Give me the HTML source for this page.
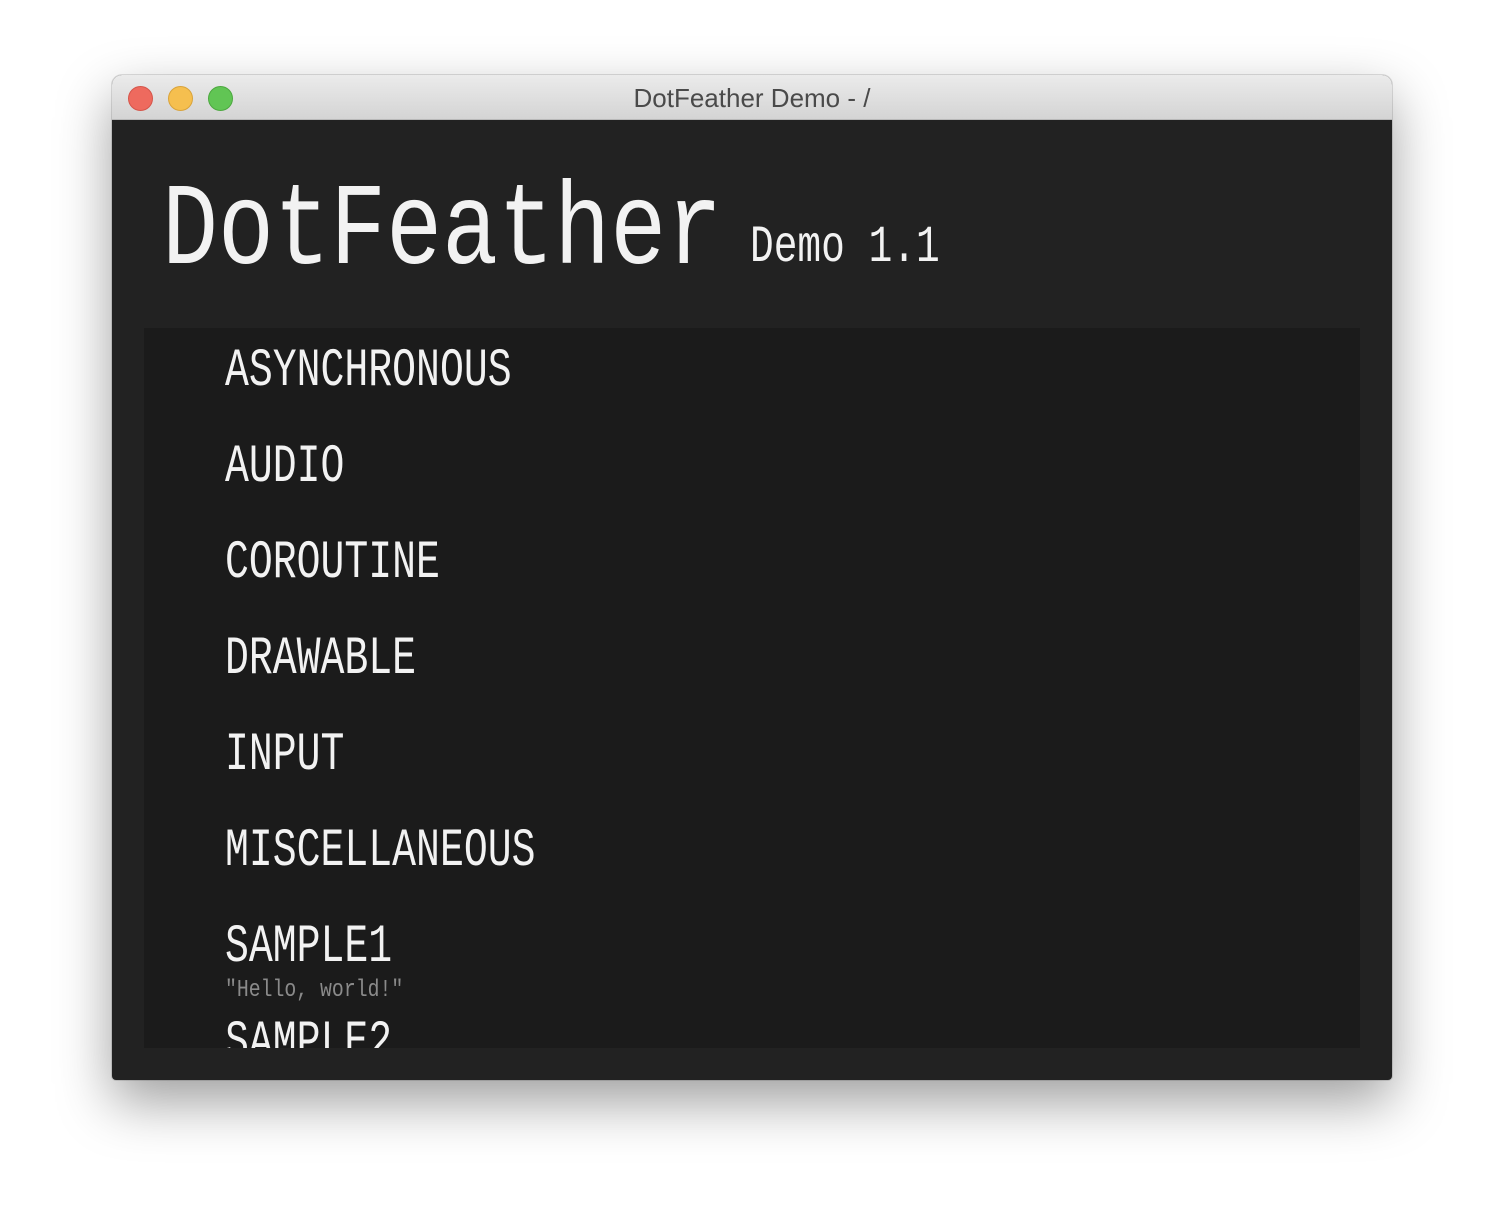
<!DOCTYPE html>
<html><head><meta charset="utf-8"><style>
*{margin:0;padding:0;box-sizing:border-box}
body{width:1504px;height:1228px;background:#fff;position:relative;overflow:hidden;font-family:"Liberation Mono",monospace}
.win{position:absolute;left:112px;top:75px;width:1280px;height:1005px;border-radius:10px 10px 4px 4px;background:#222;box-shadow:0 22px 55px rgba(0,0,0,.38),0 0 0 1px rgba(0,0,0,.12);overflow:hidden}
.bar{position:absolute;left:0;top:0;width:1280px;height:45px;background:linear-gradient(#ebebeb,#d4d4d4);border-bottom:1px solid #b8b8b8}
.dot{position:absolute;top:11px;width:25px;height:25px;border-radius:50%}
.ttl{position:absolute;left:0;width:1280px;top:8px;text-align:center;font-family:"Liberation Sans",sans-serif;font-size:26px;color:#4a4a4a}
.panel{position:absolute;left:32px;top:253px;width:1216px;height:720px;background:#1b1b1b;overflow:hidden}
.t{position:absolute;line-height:1;white-space:nowrap;color:#f2f2f2;transform-origin:0 0}
.i{font-size:54px;transform:scaleX(0.737);left:81px}
</style></head><body>
<div class="win">
<div class="bar">
<div class="dot" style="left:16px;background:#ee6a5e;border:1px solid #d5554a"></div>
<div class="dot" style="left:56px;background:#f5bf4f;border:1px solid #d9a33a"></div>
<div class="dot" style="left:96px;background:#61c554;border:1px solid #4ca83f"></div>
<div class="ttl">DotFeather Demo - /</div>
</div>
<div class="t" style="left:50px;top:100px;font-size:117px;transform:scaleX(0.798)">DotFeather</div>
<div class="t" style="left:638px;top:147px;font-size:52px;transform:scaleX(0.76)">Demo 1.1</div>
<div class="panel">
<div class="t i" style="top:17px">ASYNCHRONOUS</div>
<div class="t i" style="top:113px">AUDIO</div>
<div class="t i" style="top:209px">COROUTINE</div>
<div class="t i" style="top:305px">DRAWABLE</div>
<div class="t i" style="top:401px">INPUT</div>
<div class="t i" style="top:497px">MISCELLANEOUS</div>
<div class="t i" style="top:593px">SAMPLE1</div>
<div class="t" style="left:81px;top:651px;font-size:24px;color:#8a8a8a;transform:scaleX(0.825)">"Hello, world!"</div>
<div class="t i" style="top:689px">SAMPLE2</div>
</div>
</div>
</body></html>
